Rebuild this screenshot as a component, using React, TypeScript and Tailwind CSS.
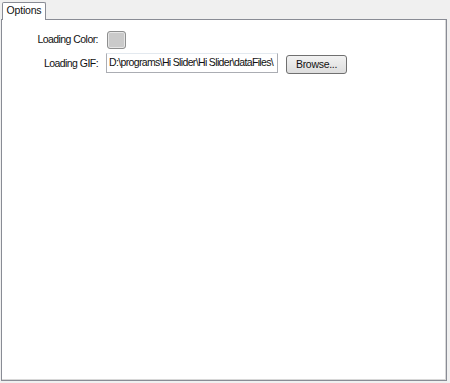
const font = { fontFamily: 'Tahoma, "Liberation Sans", sans-serif' }

export default function App() {
  return (
    <div className="w-[450px] h-[383px] bg-[#f0f0f0] pl-[1px] pt-[2px] text-[10.5px] tracking-[-0.55px] text-[#111]" style={font}>
      {/* tab strip */}
      <div className="flex h-[18px] items-end">
        <div className="relative z-10 ml-[1px] h-[18px] w-[44px] border border-b-0 border-[#898c95] bg-white rounded-t-[2px] flex items-center justify-center pb-[1px] tracking-[-0.2px]">
          Options
        </div>
      </div>

      {/* tab page */}
      <div className="mt-[-1px] w-[446px] h-[362px] border border-[#898c95] bg-white shadow-[inset_-1px_-1px_0_#d8d8d8]">
        <div className="grid grid-cols-[96px_auto] items-center gap-x-[8px] pt-[11px]">
          <div className="text-right">Loading Color:</div>
          <div className="h-[18px] w-[19px] ml-[1px] rounded-[3px] border border-[#8e8f8f] bg-[#cacaca] shadow-[inset_0_0_0_1px_#e6e6e6]" />

          <div className="mt-[4px] text-right">Loading GIF:</div>
          <div className="mt-[4px] flex items-start gap-[8px]">
            <div className="h-[20px] w-[172px] border border-[#abadb3] border-t-[#e3e9ef] pl-[2px] flex items-center whitespace-nowrap overflow-hidden tracking-[-0.65px]">
              D:\programs\Hi Slider\Hi Slider\dataFiles\
            </div>
            <button className="mt-[2px] h-[19px] w-[61px] rounded-[3px] border border-[#707070] bg-gradient-to-b from-[#f2f2f2] to-[#dddddd] flex items-center justify-center pt-[1px] tracking-[-0.3px]">
              Browse...
            </button>
          </div>
        </div>
      </div>
    </div>
  )
}
